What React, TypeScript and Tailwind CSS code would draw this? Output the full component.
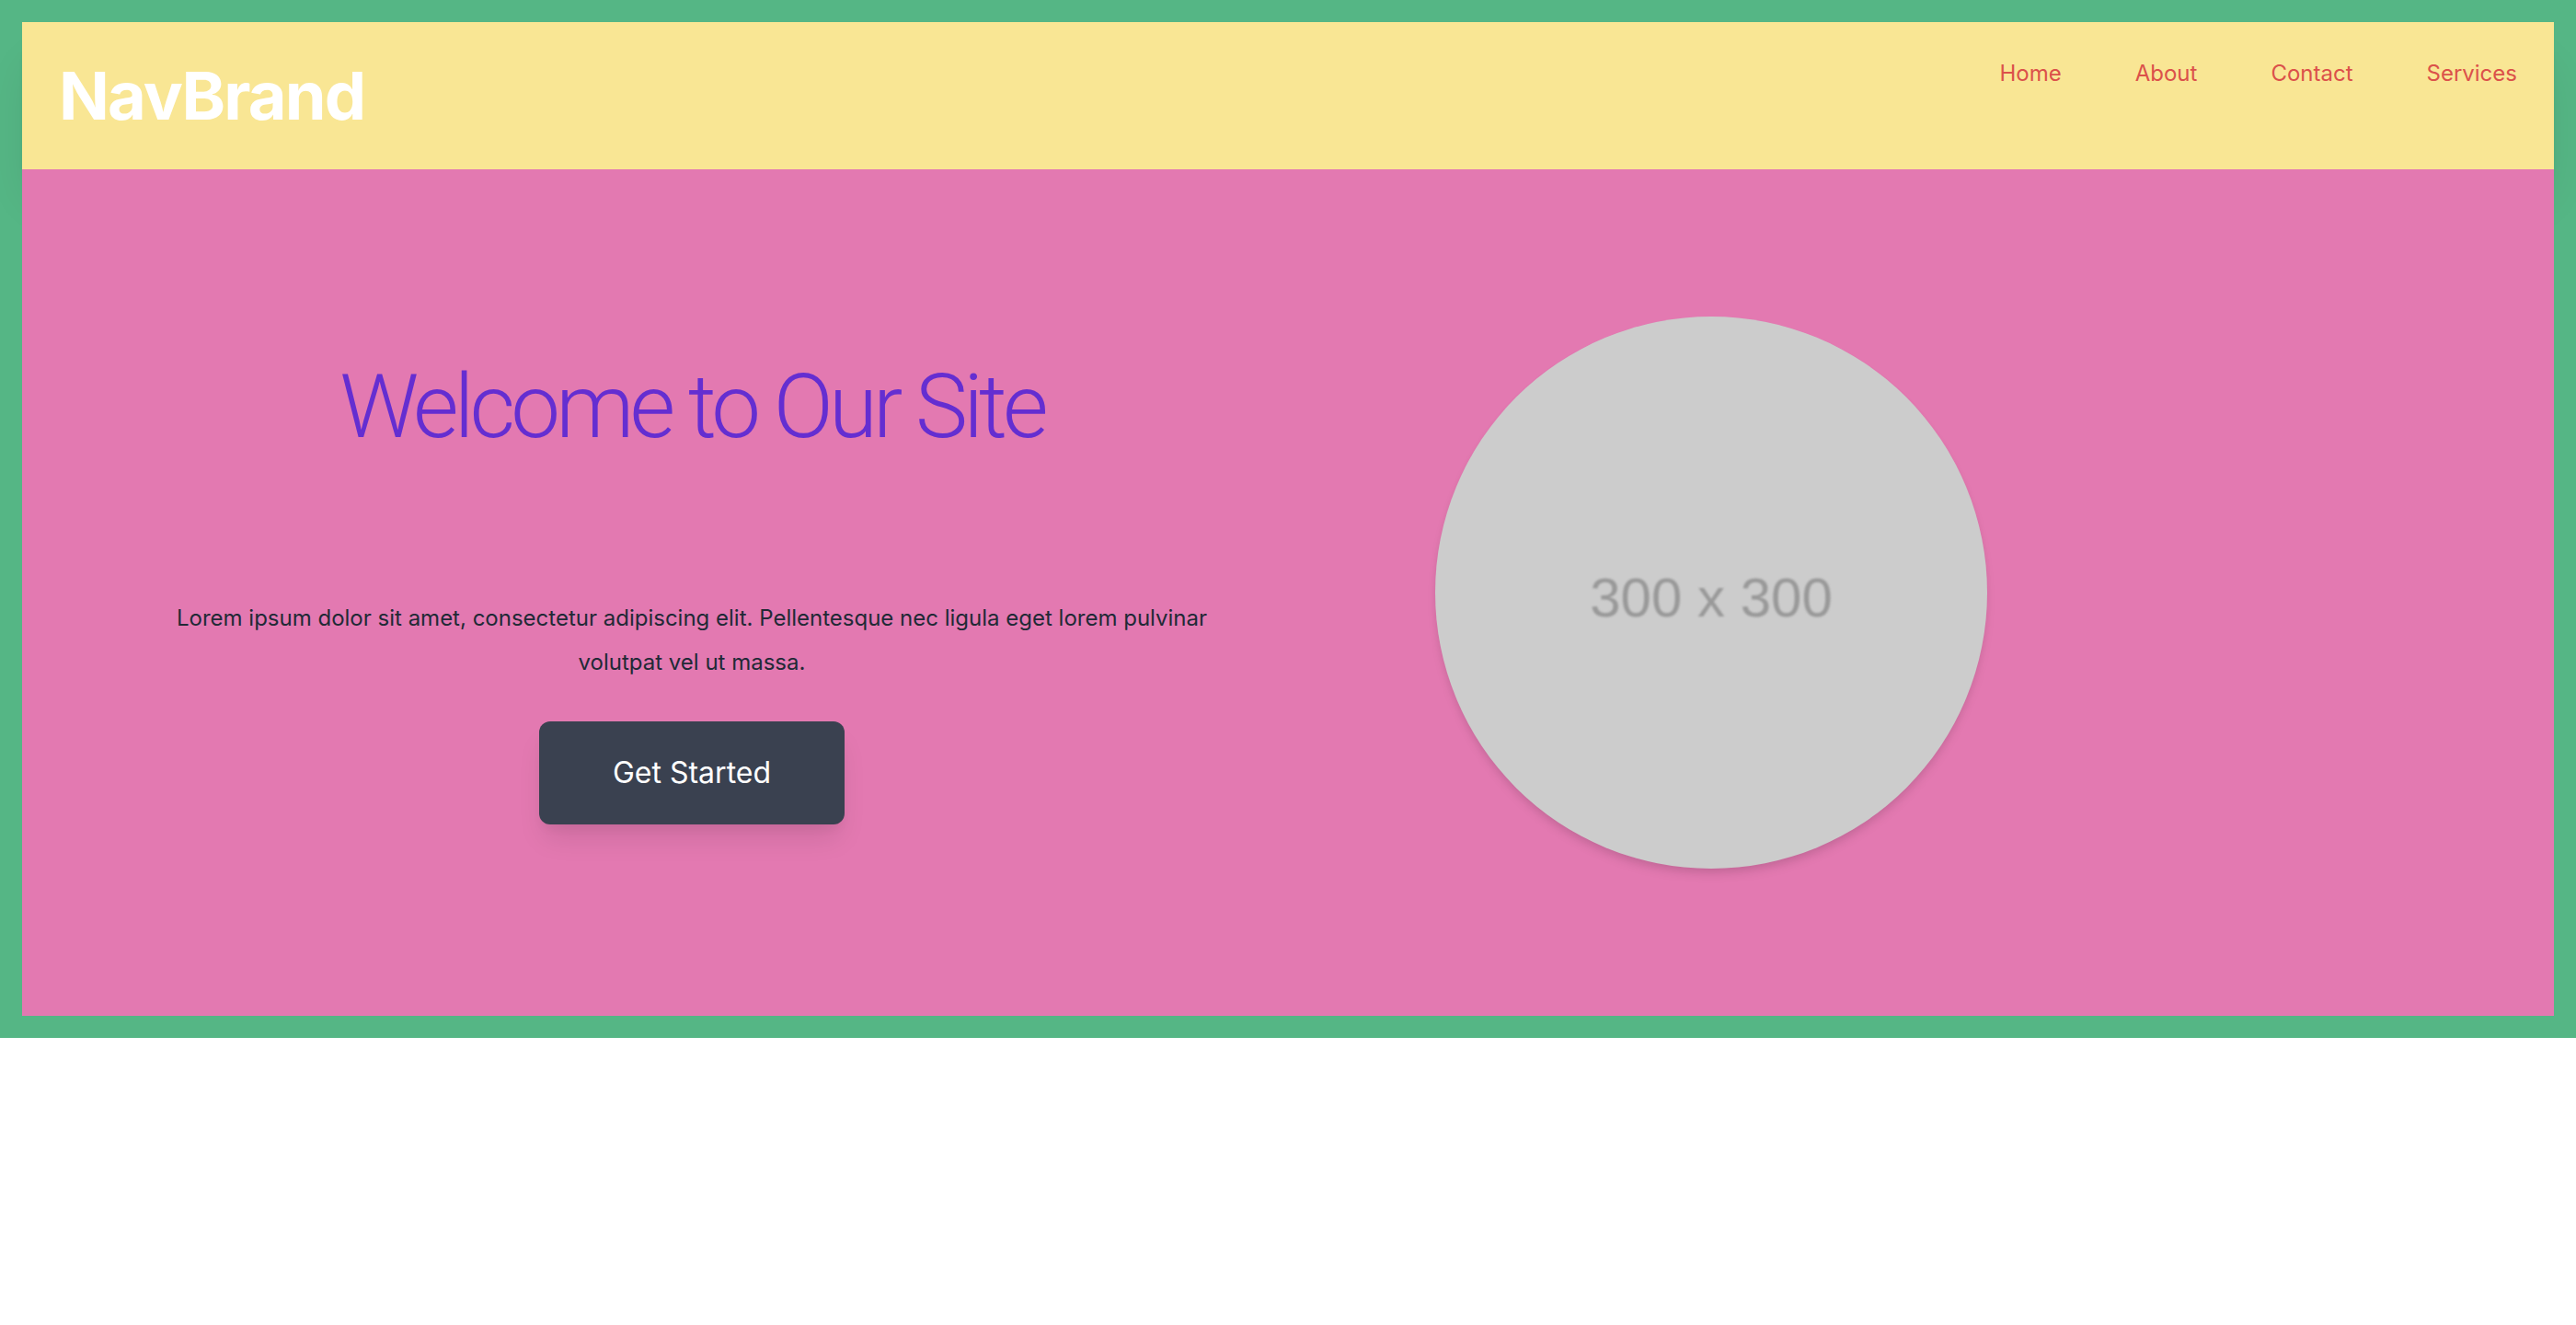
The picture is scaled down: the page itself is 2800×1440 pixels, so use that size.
const links = ["Home", "About", "Contact", "Services"];

function NavBar() {
  return (
    <nav className="flex items-start justify-between bg-[#f9e694] p-10 shadow-[0_40px_50px_-10px_rgba(0,0,0,0.1),0_20px_20px_-10px_rgba(0,0,0,0.04)]">
      <a href="#" className="text-[72px] leading-[80px] font-bold tracking-tight text-white">
        NavBrand
      </a>
      <ul className="flex gap-20">
        {links.map((label) => (
          <li key={label}>
            <a href={`#${label.toLowerCase()}`} className="block text-2xl leading-8 text-[#db514a]">
              {label}
            </a>
          </li>
        ))}
      </ul>
    </nav>
  );
}

function Hero() {
  return (
    <main className="grid grid-cols-2 items-center gap-40 bg-[#e379b1] p-40">
      <div className="text-center">
        <h1 className="mb-39 font-['Roboto',sans-serif] text-8xl leading-[100px] font-light tracking-tighter text-[#642ed1]">
          Welcome to Our Site
        </h1>
        <p className="mb-10 text-2xl leading-12 text-[#212936]">
          Lorem ipsum dolor sit amet, consectetur adipiscing elit. Pellentesque nec ligula eget lorem pulvinar volutpat
          vel ut massa.
        </p>
        <button
          type="button"
          className="mx-auto block rounded-xl bg-[#3a4150] px-20 py-8 text-[32px] leading-12 font-normal text-white shadow-[0_20px_30px_-6px_rgba(0,0,0,0.1),0_8px_12px_-4px_rgba(0,0,0,0.05)]"
        >
          Get Started
        </button>
      </div>
      <div className="pl-20">
        <div
          role="img"
          aria-label="300 x 300"
          className="flex size-150 items-center justify-center rounded-full bg-[#cccccc] pt-3 shadow-[0_8px_12px_-2px_rgba(0,0,0,0.1),0_4px_8px_-2px_rgba(0,0,0,0.06)]"
        >
          <span className="font-['Liberation_Sans',sans-serif] text-6xl leading-none text-[#999999] blur-[1px]">
            300 x 300
          </span>
        </div>
      </div>
    </main>
  );
}

export default function App() {
  return (
    <div className="min-h-screen bg-white font-['Inter',sans-serif]">
      <div className="bg-[#55b685] p-6">
        <NavBar />
        <Hero />
      </div>
    </div>
  );
}
